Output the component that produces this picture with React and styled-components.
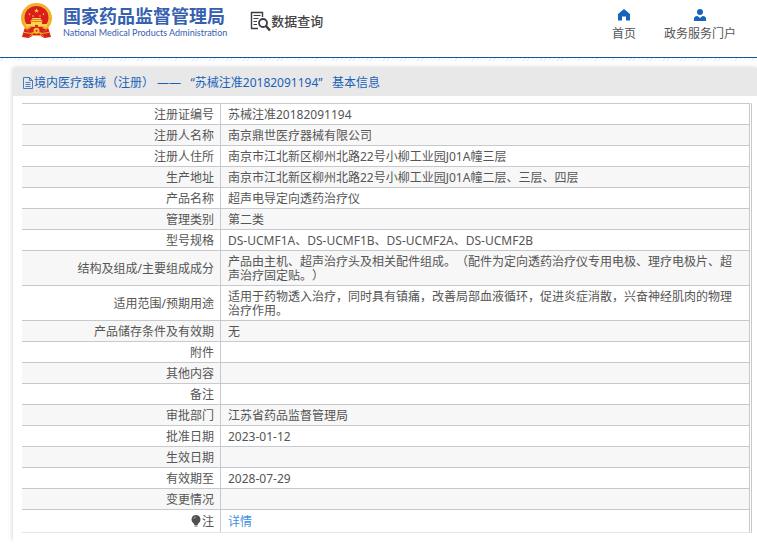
import styled, { createGlobalStyle } from 'styled-components';

const GlobalStyle = createGlobalStyle`
  * { box-sizing: border-box; }

  body {
    margin: 0;
    background: #fff;
    color: #555;
    font-family: "Noto Sans", "Noto Sans CJK SC", sans-serif;
    font-size: 12px;
    line-height: 14px;
    text-spacing-trim: space-all;
  }
`;

const Header = styled.header`
  display: flex;
  align-items: flex-start;
  height: 58px;
  padding: 0 21px 0 20px;
  border-bottom: 1px solid #12569a;
`;

const Brand = styled.a`
  display: flex;
  align-items: flex-start;
  gap: 10px;
  padding-top: 3px;
  color: #3660b0;
  text-decoration: none;
`;

const BrandText = styled.div`
  display: flex;
  flex-direction: column;
  padding-top: 2px;
  white-space: nowrap;
`;

const BrandName = styled.span`
  font-size: 18px;
  font-weight: 700;
  line-height: 22px;
`;

const BrandSub = styled.span`
  font-family: Lato, sans-serif;
  font-size: 9px;
  font-weight: 400;
  line-height: 12px;
`;

const SearchTitle = styled.h1`
  display: flex;
  align-items: center;
  margin: 10px 0 0 23px;
  color: #444;
  font-size: 13px;
  font-weight: 500;
  line-height: 20px;
  white-space: nowrap;
`;

const Nav = styled.nav`
  display: flex;
  gap: 28px;
  margin-left: auto;
  padding-top: 9px;
`;

const NavLink = styled.a`
  display: flex;
  flex-direction: column;
  align-items: center;
  gap: 5px;
  color: #555;
  line-height: 16px;
  text-decoration: none;
  white-space: nowrap;
`;

const Hatch = styled.div`
  height: 3px;
  background: repeating-linear-gradient(135deg, #fff 0 2px, #ededed 2px 3px);
`;

const Panel = styled.main`
  margin: 7px 0 0 13px;
  padding-bottom: 8px;
  background: #fff;
  box-shadow: 0 0 5px #ccc;
`;

const PanelTitle = styled.h2`
  display: flex;
  align-items: center;
  height: 28px;
  margin: 0;
  padding: 2px 0 0 9px;
  background: #e8e8e8;
  color: #1a62b8;
  font-size: 12px;
  font-weight: 400;
  white-space: pre;
`;

const TableFrame = styled.div`
  margin: 7px 5px 0 9px;
  border-right: 1px solid #c8c9cc;
  padding-right: 1px;
`;

const Table = styled.table`
  width: 100%;
  border-collapse: separate;
  border-spacing: 0;
  border-right: 1px solid #c8c9cc;
  border-bottom: 1px solid #e6e6e6;
`;

const Row = styled.tr`
  &:nth-child(even) { background: #f7f7f7; }
  &:last-child > * { height: 23px; }
`;

const Label = styled.th`
  width: 199px;
  height: 21px;
  padding: 4px 6px 2px;
  border-top: 1px solid #c8c9cc;
  border-right: 1px solid #c8c9cc;
  font-weight: 400;
  text-align: right;
`;

const Value = styled.td`
  height: 21px;
  padding: 4px 12px 2px 7px;
  border-top: 1px solid #c8c9cc;
`;

const DetailLink = styled.a`
  color: #3e8fe4;
  text-decoration: none;
`;

const records = [
  ['注册证编号', '苏械注准20182091194'],
  ['注册人名称', '南京鼎世医疗器械有限公司'],
  ['注册人住所', '南京市江北新区柳州北路22号小柳工业园J01A幢三层'],
  ['生产地址', '南京市江北新区柳州北路22号小柳工业园J01A幢二层、三层、四层'],
  ['产品名称', '超声电导定向透药治疗仪'],
  ['管理类别', '第二类'],
  ['型号规格', 'DS-UCMF1A、DS-UCMF1B、DS-UCMF2A、DS-UCMF2B'],
  ['结构及组成/主要组成成分', '产品由主机、超声治疗头及相关配件组成。（配件为定向透药治疗仪专用电极、理疗电极片、超声治疗固定贴。）'],
  ['适用范围/预期用途', '适用于药物透入治疗，同时具有镇痛，改善局部血液循环，促进炎症消散，兴奋神经肌肉的物理治疗作用。'],
  ['产品储存条件及有效期', '无'],
  ['附件', ''],
  ['其他内容', ''],
  ['备注', ''],
  ['审批部门', '江苏省药品监督管理局'],
  ['批准日期', '2023-01-12'],
  ['生效日期', ''],
  ['有效期至', '2028-07-29'],
  ['变更情况', ''],
];

const STAR = 'M0-5 1.2-1.6 4.8-1.6 1.9.6 3 4 0 1.9-3 4-1.9.6-4.8-1.6-1.2-1.6Z';

function Emblem() {
  return (
    <svg width="33" height="35" viewBox="0 0 66 72" preserveAspectRatio="none" aria-hidden="true">
      <path d="M10 50 4 70l13 2 8-4h16l8 4 13-2-6-20Z" fill="#d8201c" />
      <circle cx="33" cy="31" r="31" fill="#f3b52d" />
      <circle cx="33" cy="31" r="29" fill="none" stroke="#eba326" strokeWidth="2" strokeDasharray="3 3" />
      <circle cx="33" cy="30" r="24" fill="#da1f1b" />
      <path d={STAR} transform="translate(33 16)" fill="#ffd94a" />
      <g fill="#ffd94a">
        <path d={STAR} transform="translate(19 23) scale(.5)" />
        <path d={STAR} transform="translate(26 27) scale(.5)" />
        <path d={STAR} transform="translate(40 27) scale(.5)" />
        <path d={STAR} transform="translate(47 23) scale(.5)" />
      </g>
      <path d="M23 34 25 31h16l2 3ZM20 38l3-3h20l3 3ZM22 39h22v4H22ZM12 43h42v6H12Z" fill="#ffd54a" />
      <path d="M30 45h6v4h-6Z" fill="#da1f1b" />
      <path d="M14 54c12-4 26-4 38 0l-6 6H20Z" fill="#d8201c" />
      <circle cx="33" cy="57" r="6" fill="#f6c23a" />
      <circle cx="33" cy="57" r="2" fill="#da1f1b" />
      <path d="M7 60c9 2 14 3 20 2l-8 7M59 60c-9 2-14 3-20 2l8 7M24 67h18" fill="none" stroke="#f3b52d" strokeWidth="2" />
    </svg>
  );
}

function SearchDocIcon() {
  return (
    <svg width="21" height="22" viewBox="0 0 21 22" fill="none" stroke="#3b3b44" aria-hidden="true">
      <path d="M8 18.5H1.5v-16h11V7" strokeWidth="1.4" />
      <path d="M3.5 5.5h7M3.5 8.5h5M3.5 11.500h3.500M3.500 14.500h3.500" strokeWidth="1.2" />
      <circle cx="13" cy="13" r="4" strokeWidth="1.8" />
      <path d="m16 16 4 4.500" strokeWidth="2.4" />
    </svg>
  );
}

function HomeIcon() {
  return (
    <svg width="12" height="12" viewBox="0 0 12 12" fill="#1664bd" aria-hidden="true">
      <path d="M6 0 0 5v6.500h4V7.500h4v4h4V5Z" />
    </svg>
  );
}

function UserIcon() {
  return (
    <svg width="12" height="12" viewBox="0 0 12 12" fill="#1664bd" aria-hidden="true">
      <circle cx="6" cy="3" r="3" />
      <path d="M0 12V9.500Q0 7 3.500 7L6 9l2.500-2Q12 7 12 9.500V12Z" />
    </svg>
  );
}

function FileIcon() {
  return (
    <svg width="12" height="12" viewBox="0 0 12 12" fill="none" stroke="#1a62b8" aria-hidden="true">
      <path d="M1.500.5h6l3 3v8h-9ZM7.500.5v3h3M3.500 5.500h5M3.500 7.500h5M3.500 9.500h5" strokeWidth=".8" />
    </svg>
  );
}

const Bulb = styled.svg`
  margin-right: 1px;
  vertical-align: -1px;
`;

export default function App() {
  return (
    <>
      <GlobalStyle />
      <Header>
        <Brand href="#">
          <Emblem />
          <BrandText>
            <BrandName>国家药品监督管理局</BrandName>
            <BrandSub>National Medical Products Administration</BrandSub>
          </BrandText>
        </Brand>
        <SearchTitle>
          <SearchDocIcon />
          数据查询
        </SearchTitle>
        <Nav>
          <NavLink href="#"><HomeIcon />首页</NavLink>
          <NavLink href="#"><UserIcon />政务服务门户</NavLink>
        </Nav>
      </Header>
      <Hatch />
      <Panel>
        <PanelTitle>
          <FileIcon />
          境内医疗器械（注册） ——   “苏械注准20182091194”   基本信息
        </PanelTitle>
        <TableFrame>
          <Table>
            <tbody>
              {records.map(([label, value]) => (
                <Row key={label}>
                  <Label scope="row">{label}</Label>
                  <Value>{value}</Value>
                </Row>
              ))}
              <Row>
                <Label scope="row">
                  <Bulb width="10" height="12" viewBox="0 0 10 12" aria-hidden="true">
                    <path d="M5 0a4.500 4.500 0 0 0-2.500 8.200L3.500 10h3l1-1.800A4.500 4.500 0 0 0 5 0ZM3.500 10.500h3v1h-3Z" fill="#505050" />
                    <path d="M2.500 4Q3 2 5 2" fill="none" stroke="#bbb" strokeWidth=".8" />
                  </Bulb>
                  注
                </Label>
                <Value><DetailLink href="#">详情</DetailLink></Value>
              </Row>
            </tbody>
          </Table>
        </TableFrame>
      </Panel>
    </>
  );
}
